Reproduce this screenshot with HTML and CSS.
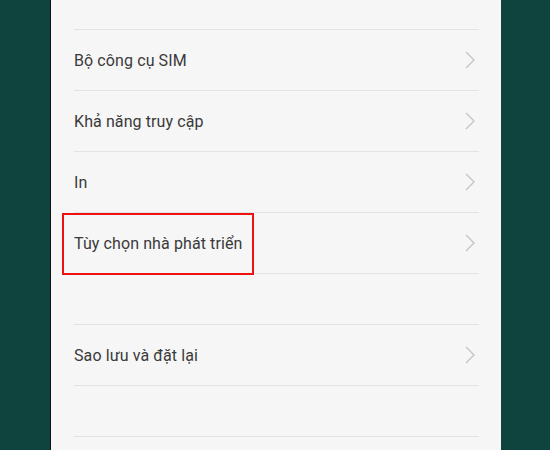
FILE: index.html
```html
<!DOCTYPE html>
<html lang="vi">
<head>
<meta charset="utf-8">
<link rel="stylesheet" href="styles.css">
</head>
<body>
<div class="screen">
  <div class="side side-left"></div>
  <div class="edge"></div>
  <div class="panel">
    <div class="spacer spacer-top"></div>
    <div class="row"><span class="label">Bộ công cụ SIM</span><svg class="chev" viewBox="0 0 10 18" width="10" height="18"><path d="M1 1 L9 9 L1 17" /></svg></div>
    <div class="row"><span class="label">Khả năng truy cập</span><svg class="chev" viewBox="0 0 10 18" width="10" height="18"><path d="M1 1 L9 9 L1 17" /></svg></div>
    <div class="row"><span class="label">In</span><svg class="chev" viewBox="0 0 10 18" width="10" height="18"><path d="M1 1 L9 9 L1 17" /></svg></div>
    <div class="row"><span class="label">Tùy chọn nhà phát triển</span><svg class="chev" viewBox="0 0 10 18" width="10" height="18"><path d="M1 1 L9 9 L1 17" /></svg></div>
    <div class="spacer spacer-gap"></div>
    <div class="row"><span class="label">Sao lưu và đặt lại</span><svg class="chev" viewBox="0 0 10 18" width="10" height="18"><path d="M1 1 L9 9 L1 17" /></svg></div>
    <div class="spacer spacer-gap"></div>
    <div class="highlight"></div>
  </div>
  <div class="side side-right"></div>
</div>
</body>
</html>
```
FILE: styles.css
```css
html, body {
  margin: 0;
  padding: 0;
  width: 550px;
  height: 450px;
  overflow: hidden;
}
.screen {
  display: flex;
  width: 550px;
  height: 450px;
  font-family: Roboto, "Noto Sans", sans-serif;
}
.side {
  background: #0f443e;
  height: 100%;
}
.side-left { width: 50px; }
.side-right { width: 49px; }
.edge {
  width: 1px;
  background: #111;
}
.panel {
  position: relative;
  width: 450px;
  background: #f6f6f6;
  padding: 0 22px 0 23px;
  box-sizing: border-box;
  display: flex;
  flex-direction: column;
}
.spacer, .row {
  flex: none;
  border-bottom: 1px solid #e3e3e3;
}
.spacer-top { height: 29px; }
.spacer-gap { height: 50px; }
.row {
  height: 60px;
  display: flex;
  align-items: center;
  justify-content: space-between;
}
.label {
  font-size: 16px;
  color: #3a3a3a;
  letter-spacing: 0.1px;
}
.chev {
  margin-right: 4px;
  fill: none;
  stroke: #c6c6c6;
  stroke-width: 1.4;
}
.highlight {
  position: absolute;
  left: 11px;
  top: 213px;
  width: 192px;
  height: 62px;
  border: 2px solid #ee1111;
  box-sizing: border-box;
}
```
